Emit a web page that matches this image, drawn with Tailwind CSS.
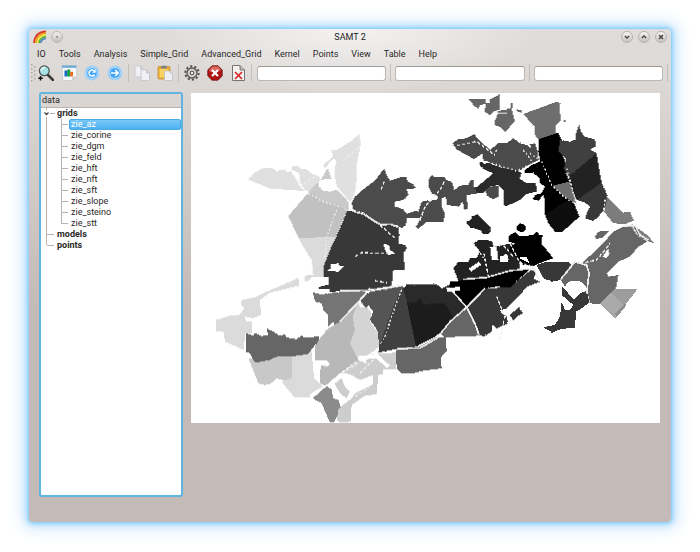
<!DOCTYPE html>
<html lang="en">
<head>
<meta charset="utf-8">
<title>SAMT 2</title>
<script src="https://cdn.jsdelivr.net/npm/@tailwindcss/browser@4"></script>
</head>
<body class="bg-white">
<div class="flex min-h-screen px-[29px] pt-[29px] pb-[30px] font-['Roboto','Noto_Sans',sans-serif] text-[9px] leading-[11px] text-[#2b2827]">
<div class="flex min-w-0 flex-1 flex-col rounded-[4px] bg-[radial-gradient(ellipse_190px_64px_at_50%_0,#f3f2f1,transparent),linear-gradient(#dfdddb_0,#dbd7d4_60px,#c4bab7_280px)] shadow-[0_0_3px_1px_#86d0fb,0_0_7px_2px_#9bd6fb,0_0_16px_7px_#d3e8fd]">

<header class="flex h-4 items-center px-1 text-[#222]">
  <div class="flex w-[46px] items-center gap-1">
  <svg class="size-[14px]" viewBox="0 0 14 14" fill="none" stroke-width="1.8"><path stroke="#d93a2b" d="M1 13Q2 2 13 1.500"/><path stroke="#f0a21c" d="M2.700 13Q4 4 13 3.200"/><path stroke="#f5e53b" d="M4.400 13Q5.500 6 13 4.900"/><path stroke="#59b83c" d="M6 13Q7 7.500 13 6.600"/><path stroke="#5b87c9" d="M7.700 13Q8 9 13 8.300"/></svg>
  <button aria-label="Window menu" class="flex size-3 items-center justify-center rounded-full border border-[#bbb8b6] bg-linear-to-b from-[#f0f0ef] to-[#c4c1bf]"><span class="size-[2px] rounded-full bg-[#888]"></span></button>
  </div>
  <h1 class="flex-1 text-center">SAMT 2</h1>
  <div class="flex gap-[5px]">
    <button aria-label="Minimize" class="flex size-3 items-center justify-center rounded-full border border-[#b5b2af] bg-linear-to-b from-[#f6f6f5] to-[#c4c0bd]"><svg class="size-2" viewBox="0 0 8 8" fill="none" stroke="#444" stroke-width="1.300"><path d="M1.800 3 4 5 6.200 3"/></svg></button>
    <button aria-label="Maximize" class="flex size-3 items-center justify-center rounded-full border border-[#b5b2af] bg-linear-to-b from-[#f6f6f5] to-[#c4c0bd]"><svg class="size-2" viewBox="0 0 8 8" fill="none" stroke="#444" stroke-width="1.300"><path d="M1.800 5 4 3 6.200 5"/></svg></button>
    <button aria-label="Close" class="flex size-3 items-center justify-center rounded-full border border-[#b5b2af] bg-linear-to-b from-[#f6f6f5] to-[#c4c0bd]"><svg class="size-2" viewBox="0 0 8 8" fill="none" stroke="#444" stroke-width="1.400"><path d="M2 2 6 6M6 2 2 6"/></svg></button>
  </div>
</header>

<nav class="flex h-[18px] items-center gap-[13px] px-2">
  <button>IO</button><button>Tools</button><button>Analysis</button><button>Simple_Grid</button><button>Advanced_Grid</button><button>Kernel</button><button>Points</button><button>View</button><button>Table</button><button>Help</button>
</nav>

<div class="flex h-[20px] items-center pr-[3px] pl-[2px]">
  <svg class="mr-[2px] h-5 w-[5px] shrink-0" viewBox="0 0 5 20" fill="#aaa6a3"><path d="M0 1h1.500v1.500H0zM3 3h1.500v1.500H3zM0 5h1.500v1.500H0zM3 7h1.500v1.500H3zM0 9h1.500v1.500H0zM3 11h1.500v1.500H3zM0 13h1.500v1.500H0zM3 15h1.500v1.500H3zM0 17h1.500v1.500H0z"/></svg>
  <div class="flex shrink-0 gap-[7px]">
    <button aria-label="Zoom"><svg class="size-4" viewBox="0 0 16 16"><path d="M9.500 9.500 15 15" stroke="#3b3b3b" stroke-width="2.600" stroke-linecap="round"/><circle cx="6.300" cy="5.800" r="4.900" fill="#a5e1e5" stroke="#4c5555" stroke-width="1.300"/><path d="M3 5.500Q4 2.500 7 2.500" stroke="#effcfc" stroke-width="1.500" fill="none"/><path d="M2.500 11v4.500M.3 13.200h4.500" stroke="#111" stroke-width="1.400"/></svg></button>
    <button aria-label="Chart"><svg class="size-4" viewBox="0 0 16 16"><path d="M1 .5h14.500v11L11 15.500H2z" fill="#f7f9fa" stroke="#bdc3c6" stroke-width=".6"/><path d="M1 .5h14.500v2.300H1z" fill="#6da8d6"/><path d="M15.500 11.500 11 15.500l.5-3.500z" fill="#c4c8ca"/><path d="M3.500 5.500h2.700v6H3.500z" fill="#1464c8"/><path d="M6.200 4.500h3v7h-3z" fill="#129c44"/><path d="M9.200 6.800h2.800v4.700H9.200z" fill="#ee6b1d"/></svg></button>
    <button aria-label="Refresh"><svg class="size-4" viewBox="0 0 16 16" fill="none"><circle cx="8" cy="8" r="6.700" fill="#3fa2f4" stroke="#9fd0fa" stroke-width="1.400"/><circle cx="8" cy="8" r="5.400" stroke="#e9f6ff" stroke-width=".8"/><path d="M10.600 9.500A3 3 0 1 1 10.200 5.900" stroke="#fff" stroke-width="1.500"/><path d="M11.700 4v3.800H8z" fill="#fff"/></svg></button>
    <button aria-label="Forward"><svg class="size-4" viewBox="0 0 16 16" fill="none"><circle cx="8" cy="8" r="6.700" fill="#3fa2f4" stroke="#9fd0fa" stroke-width="1.400"/><circle cx="8" cy="8" r="5.400" stroke="#e9f6ff" stroke-width=".8"/><path d="M4 8h7M8.200 5 11.200 8l-3 3" stroke="#fff" stroke-width="1.600"/></svg></button>
  </div>
  <span class="mx-[5px] h-[18px] w-px shrink-0 bg-[#c3bfbc]"></span>
  <div class="flex shrink-0 gap-[7px]">
    <button aria-label="Copy"><svg class="size-4" viewBox="0 0 16 16" fill="#f1f1f5" stroke="#c1c1cb" stroke-width=".8"><path d="M1 1h5.500L9 4v8H1z"/><path d="M6.500 1v3H9" fill="#cfcfd9"/><path d="M7 5h5.500L15.500 8v7.500H7z"/><path d="M12.500 5v3h3" fill="#cfcfd9"/></svg></button>
    <button aria-label="Paste"><svg class="size-4" viewBox="0 0 16 16"><rect x="1" y="1.500" width="12" height="12.500" rx="1" fill="#e9ad36" stroke="#bf8520" stroke-width=".7"/><rect x="2.500" y="4" width="9" height="8.500" fill="#f8d25e"/><path d="M4 3.500V1.500l2-.9h2l2 .9v2z" fill="#858585"/><path d="M7.500 6h5L15.500 9v6.500h-8z" fill="#eeeef3" stroke="#b9b9c4" stroke-width=".7"/><path d="M12.500 6v3h3" fill="#cfcfd9"/></svg></button>
  </div>
  <span class="mx-[5px] h-[18px] w-px shrink-0 bg-[#c3bfbc]"></span>
  <div class="flex shrink-0 gap-[7px]">
    <button aria-label="Settings"><svg class="size-4" viewBox="0 0 16 16" fill="none" stroke="#555"><circle cx="8" cy="8" r="6.700" stroke-width="2" stroke-dasharray="2.200 2.009"/><circle cx="8" cy="8" r="5" fill="#d3d1cf" stroke-width="1.300"/><circle cx="8" cy="8" r="1.800" fill="#eee" stroke-width="1.100"/></svg></button>
    <button aria-label="Stop"><svg class="size-4" viewBox="0 0 16 16"><path d="M5 .8h6L15.200 5v6L11 15.200H5L.8 11V5z" fill="#ac1514" stroke="#711312" stroke-width=".8"/><path d="M5 1.600h6L14 5q-6 4-12 1z" fill="#dc6a62"/><path d="m5 5 6 6m0-6-6 6" stroke="#fff" stroke-width="2.200"/></svg></button>
    <button aria-label="Delete file"><svg class="size-4" viewBox="0 0 16 16"><path d="M2.500.500h7.500L14.500 5v10.500h-12z" fill="#f3f2f0" stroke="#777573"/><path d="M10 .5V5h4.500" fill="#bbb" stroke="#555" stroke-width=".7"/><path d="m5 7 7 7m0-7-7 7" stroke="#d92525" stroke-width="1.700"/></svg></button>
  </div>
  <span class="mx-[5px] h-[18px] w-px shrink-0 bg-[#c3bfbc]"></span>
  <input aria-label="Field 1" class="h-[15px] w-0 min-w-0 flex-1 rounded-[3px] border border-[#bdb8b5] border-t-[#a29c99] bg-white px-1">
  <span class="mx-1 h-[18px] w-px shrink-0 bg-[#c3bfbc]"></span>
  <input aria-label="Field 2" class="h-[15px] w-0 min-w-0 flex-1 rounded-[3px] border border-[#bdb8b5] border-t-[#a29c99] bg-white px-1">
  <span class="mx-1 h-[18px] w-px shrink-0 bg-[#c3bfbc]"></span>
  <input aria-label="Field 3" class="h-[15px] w-0 min-w-0 flex-1 rounded-[3px] border border-[#bdb8b5] border-t-[#a29c99] bg-white px-1">
  <span class="ml-1 h-[18px] w-px shrink-0 bg-[#c3bfbc]"></span>
</div>

<main class="flex flex-1 gap-2 pt-[9px] pr-[11px] pb-[25px] pl-[10px]">
  <aside class="w-36 shrink-0 rounded-[3px] border-2 border-[#5fb4e0] bg-white">
    <h2 class="h-[14px] border-b border-[#b9b4b1] bg-[#d9d5d2] px-px leading-[13px]">data</h2>
    <ul class="relative pl-4 before:absolute before:top-0 before:left-[5px] before:h-[137px] before:w-px before:bg-[#b5b2b0]">
      <li class="relative before:absolute before:top-[5px] before:left-[-7px] before:h-px before:w-[5px] before:bg-[#b5b2b0]">
        <svg class="absolute top-[2px] left-[-14px] h-[7px] w-[7px] bg-white" viewBox="0 0 7 7" fill="none" stroke="#444" stroke-width="1.300"><path d="M1.500 2.500 3.500 4.500 5.500 2.500"/></svg>
        <span class="font-bold">grids</span>
        <ul class="relative pl-[12px] before:absolute before:top-0 before:left-[4px] before:h-[105px] before:w-px before:bg-[#b5b2b0]">
          <li class="relative rounded-[2px] border border-[#48a8e4] bg-linear-to-b from-[#78c8f8] to-[#4eb1ef] pl-px leading-[9px] text-white before:absolute before:top-[4px] before:left-[-9px] before:h-px before:w-[7px] before:bg-[#b5b2b0]">zie_az</li>
          <li class="relative pl-[2px] before:absolute before:top-[5px] before:left-[-8px] before:h-px before:w-[7px] before:bg-[#b5b2b0]">zie_corine</li>
          <li class="relative pl-[2px] before:absolute before:top-[5px] before:left-[-8px] before:h-px before:w-[7px] before:bg-[#b5b2b0]">zie_dgm</li>
          <li class="relative pl-[2px] before:absolute before:top-[5px] before:left-[-8px] before:h-px before:w-[7px] before:bg-[#b5b2b0]">zie_feld</li>
          <li class="relative pl-[2px] before:absolute before:top-[5px] before:left-[-8px] before:h-px before:w-[7px] before:bg-[#b5b2b0]">zie_hft</li>
          <li class="relative pl-[2px] before:absolute before:top-[5px] before:left-[-8px] before:h-px before:w-[7px] before:bg-[#b5b2b0]">zie_nft</li>
          <li class="relative pl-[2px] before:absolute before:top-[5px] before:left-[-8px] before:h-px before:w-[7px] before:bg-[#b5b2b0]">zie_sft</li>
          <li class="relative pl-[2px] before:absolute before:top-[5px] before:left-[-8px] before:h-px before:w-[7px] before:bg-[#b5b2b0]">zie_slope</li>
          <li class="relative pl-[2px] before:absolute before:top-[5px] before:left-[-8px] before:h-px before:w-[7px] before:bg-[#b5b2b0]">zie_steino</li>
          <li class="relative pl-[2px] before:absolute before:top-[5px] before:left-[-8px] before:h-px before:w-[7px] before:bg-[#b5b2b0]">zie_stt</li>
        </ul>
      </li>
      <li class="relative font-bold before:absolute before:top-[5px] before:left-[-10px] before:h-px before:w-[7px] before:bg-[#b5b2b0]">models</li>
      <li class="relative font-bold before:absolute before:top-[5px] before:left-[-10px] before:h-px before:w-[7px] before:bg-[#b5b2b0]">points</li>
    </ul>
  </aside>

  <section class="min-w-0 flex-1 pt-px" aria-label="Map">
  <svg class="block w-full bg-white" viewBox="573 279 1407 990">
    <defs><filter id="rough" x="0" y="0" width="100%" height="100%"><feTurbulence type="fractalNoise" baseFrequency=".15" numOctaves="2" seed="4"/><feDisplacementMap in="SourceGraphic" scale="5" xChannelSelector="R" yChannelSelector="G"/></filter></defs>
    <g filter="url(#rough)" shape-rendering="crispEdges">
    <!-- north-west parcels -->
    <g transform="translate(570 270)">
      <path fill="#e0e0e0" d="M173 267 195 247 215 236 235 233 250 236 260 246 270 240 285 238 292 247 303 243 312 258 320 270 330 290 345 303 300 300 240 296 210 283 180 272ZM303 238 308 228 325 228 333 236 350 238 365 250 390 262 385 277 357 303 345 300 328 275 330 252 318 245ZM422 180 440 180 480 155 510 130 511 165 505 200 500 225 500 260 497 300 485 330 478 335 460 312 440 290 435 265 435 230 440 215 430 205 405 235 400 225 425 202 430 195Z"/>
      <path fill="#c1c1c1" d="M357 305 295 378 325 443 375 445 380 441 437 440 472 362Z"/>
      <path fill="#c9c9c9" d="M413 233 424 266 388 270 385 278 388 292 400 302 420 305 440 299 460 318 477 338 475 362 430 345 390 332 357 305 385 277 395 265Z"/>
      <path fill="#dbdbdb" d="M325 443 375 445 380 441 437 440 410 508 400 530 400 560 365 562 357 572 345 575 345 557 370 555 365 510 345 480Z"/>
    </g>
    <!-- central north parcels -->
    <g transform="translate(1020 270)">
      <path fill="#4b4b4b" d="M35 340 45 320 80 290 105 272 125 245 133 238 140 255 150 272 180 262 200 262 203 275 220 283 227 295 200 297 205 315 190 330 165 335 165 350 190 358 200 372 225 363 235 365 245 335 290 330 295 318 275 310 265 290 265 270 275 255 285 262 315 262 318 270 335 275 343 300 360 287 385 285 390 272 400 270 402 290 414 292 412 310 380 316 383 355 373 360 368 335 355 350 320 345 318 320 305 325 305 350 315 370 310 397 260 395 235 417 228 410 242 385 200 385 198 405 185 415 170 405 120 402 95 385 70 367 40 360ZM338 160 355 147 380 145 403 132 412 145 425 158 462 188 480 170 480 222 430 212 428 190 402 207 370 190 350 178Z"/>
      <path fill="#383838" d="M22 362 50 362 75 372 100 392 120 402 150 402 175 412 178 435 175 460 195 465 200 475 190 490 195 540 160 540 155 588 90 602-32 605-32 598-72 595-50 587-35 585-35 562-50 560-50 530-30 480 0 415Z"/>
      <path fill="#666" d="M385 27 437 27 437 42 420 45 415 57 405 50ZM437 40 450 38 455 25 480 15 480 60 465 62 450 75 433 65 435 58Z"/>
      <path fill="#222" d="M377 395 393 390 395 380 412 373 425 385 452 412 450 430 430 432 420 420 390 412ZM400 460 415 450 455 452 462 470 515 460 540 510 540 580 480 550 390 575 355 572 340 535 355 515 385 515 390 505 410 505 420 485Z"/>
      <path fill="#fff" d="M130 460 150 468 150 480 165 490 145 495 135 480ZM-40 543-28 535-28 522-5 520 0 528 15 527 0 540-5 545ZM450 470 470 470 475 510 455 510ZM485 500 500 490 505 510 488 515Z"/>
    </g>
    <!-- north-east parcels -->
    <g transform="translate(1470 270)">
      <path fill="#666" d="M0 28 15 22 28 12 22 32 25 45 10 60 0 60ZM13 95 20 80 25 62 50 60 55 55 65 58 75 95 60 110 45 127 30 112 15 105ZM63 40 70 38 66 57 60 57ZM80 58 97 62 95 68 82 65ZM315 440 325 425 358 422 340 442 318 447ZM370 425 395 412 425 408 440 435 472 455 445 470 420 500 385 515 350 550 355 560 385 555 378 595 330 642 300 640 290 600 290 530 275 520 330 470Z"/>
      <path fill="#4b4b4b" d="M0 180 25 160 50 160 70 145 90 160 110 165 122 177 120 162 135 160 142 180 145 210 110 228 85 245 50 238 0 218-12 200Z"/>
      <path fill="#2c2c2c" d="M-33 215-20 218-20 230-30 223-10 220 0 220 40 235 85 243 95 250 88 265 110 280 138 280 140 305 110 312 90 330 50 348 40 345 40 300 25 285 0 290-20 310-40 308-45 295-20 275 10 250-15 240-28 230Z"/>
      <path fill="#4b4b4b" d="M-15 300 0 290 25 288 25 320 10 328-8 318Z"/>
      <path fill="#6e6e6e" d="M100 72 200 35 208 38 212 90 198 105 198 130 145 148 135 135 135 112 120 95ZM222 90h6v6h-6Z"/>
      <path fill="#050505" d="M145 148 205 128 215 150 222 150 210 185 225 210 222 235 238 275 190 287 220 315 250 335 268 380 235 410 215 427 195 425 175 400 165 375 165 335 160 315 145 332 128 328 135 315 155 310 165 290 150 280 150 265 130 250 105 250 105 240 125 225 150 215 145 180Z"/>
      <path fill="#111" d="M165 375 235 330 248 345 268 380 235 410 215 427 195 425 175 400Z"/>
      <path fill="#6e6e6e" d="M190 287 238 275 258 340 220 318Z"/>
      <path fill="#414141" d="M210 150 240 155 258 148 258 130 268 103 272 125 285 140 315 148 317 170 300 178 320 190 235 260 222 235 228 205 205 185Z"/>
      <path fill="#222" d="M235 260 320 190 328 240 335 278 260 330 245 295Z"/>
      <path fill="#383838" d="M260 330 335 278 352 315 345 355 325 380 310 393 285 385 290 370 300 350 285 338Z"/>
      <path fill="#7c7c7c" d="M352 320 395 365 420 365 432 392 405 402 370 400 342 365ZM425 402 450 420 475 437 492 460 470 452 445 438Z"/>
      <path fill="#000" d="M80 410 90 400 105 405 107 420 95 428 80 420ZM58 435 75 427 85 437 100 438 130 435 140 423 148 435 157 435 155 465 170 480 190 505 160 515 130 528 100 525 85 505 55 480 75 460 55 455Z"/>
      <path fill="#fff" d="M338 500 355 475 358 490 350 505Z"/>
    </g>
    <!-- south-west parcels -->
    <g transform="translate(570 750)">
      <path fill="#dbdbdb" d="M78 210 120 197 145 197 155 185 163 175 153 165 155 150 195 142 230 125 300 95 325 83 328 107 240 128 210 150 213 195 190 205 165 200 168 215 185 215 185 250 165 250 162 300 105 275 100 245 78 243ZM305 320 365 305 372 385 400 410 362 430 358 443 315 443 290 415 275 395 305 385Z"/>
      <path fill="#c8c8c8" d="M175 325 305 315 305 385 285 392 260 385 245 400 225 405 205 400Z"/>
      <path fill="#666" d="M168 250 190 257 195 248 215 258 235 256 230 235 250 245 270 258 285 253 290 262 320 268 335 255 340 262 365 262 385 257 390 275 375 285 355 312 300 320 265 318 240 330 195 338 180 310 168 305Z"/>
      <path fill="#8b8b8b" d="M410 408 425 418 430 445 445 450 455 480 430 518 420 518 395 460 368 445Z"/>
    </g>
    <!-- southern parcels -->
    <g transform="translate(1020 750)">
      <path fill="#747474" d="M-82 127-55 133 0 125 60 120 80 128 0 215-15 225-20 215-35 230-35 195-50 180-55 160-75 155Z"/>
      <path fill="#b8b8b8" d="M-60 265-35 235 0 215 55 155 65 200 60 325 0 370-45 408-60 400-58 345-40 350-30 342-42 330-75 330-75 290Z"/>
      <path fill="#d4d4d4" d="M55 155 60 172 80 170 95 190 90 215 115 250 118 290 80 318 55 330 30 280 45 240 38 200Z"/>
      <path fill="#cdcdcd" d="M5 370 55 330 80 340 75 318 120 310 168 308 168 357 130 357 128 372 115 375 110 433 75 437 35 465 32 515 0 518-10 510-5 480 15 460 35 445 45 430 85 410 100 402 100 375 60 390 30 372ZM-17 400 5 385 15 410 30 425 20 445 0 430Z"/>
      <path fill="#555" d="M60 150 90 125 190 108 170 155 118 290 112 240 90 210 100 185 85 165 78 175Z"/>
      <path fill="#414141" d="M190 110 200 150 228 290 165 298 115 308 118 285 165 155Z"/>
      <path fill="#2b2b2b" d="M190 118 200 103 290 103 305 115 330 103 382 170 315 240 228 290 200 150Z"/>
      <path fill="#1a1a1a" d="M200 155 225 160 240 145 252 162 315 160 338 200 310 240 285 260 228 290Z"/>
      <path fill="#666" d="M380 175 418 257 315 262 300 250 340 205ZM168 300 240 290 290 262 318 262 320 305 302 320 305 355 250 362 220 370 185 370 170 355Z"/>
      <path fill="#000" d="M330 95 400 88 450 75 510 60 570 58 545 80 510 112 470 110 435 115 380 170 330 120Z"/>
      <path fill="#383838" d="M380 172 435 115 510 112 560 70 575 60 590 65 580 85 600 95 560 110 540 135 500 175 455 230 455 245 435 258 418 257ZM455 205 485 180 500 200 505 220 470 235 460 225ZM510 195 535 172 550 190 530 200 520 212ZM455 200 490 190 505 215 475 227Z"/>
    </g>
    <!-- south-east parcels -->
    <g transform="translate(1470 690)">
      <path fill="#383838" d="M140 105 165 97 235 97 248 107 212 150 185 155 160 145ZM215 170 235 190 252 208 270 190 290 182 298 218 275 235 258 245 255 293 210 297 188 308 160 292 195 285 210 260 215 215 225 240 240 240 250 225 215 195Z"/>
      <path fill="#666" d="M212 150 245 105 260 97 290 110 295 180 280 160 265 152 235 155 225 170Z"/>
      <path fill="#9d9d9d" d="M375 177 442 178 375 265 330 222Z"/>
      <path fill="#aaa" d="M362 188 400 225 375 262 332 220Z"/>
      <path fill="#8f8f8f" d="M405 222 410 225 380 262 375 250Z"/>
      <path fill="#fff" d="M85 83 108 80 120 100 98 90ZM30 78 55 78 55 96 30 96ZM30 240 60 235 58 260 35 250Z"/>
    </g>
    </g>
    <!-- roads and ditches between the parcels -->
    <g fill="none" stroke="#eee" stroke-width="4" shape-rendering="crispEdges">
      <path stroke-width="5" d="M1055 632 1090 642 1125 665 1145 675 1170 672 1195 682M1020 873 1110 870 1210 855M1190 1046 1260 1044 1310 1015 1350 965 1400 922 1455 865M1355 870 1400 922 1425 970 1437 1005M1390 838 1460 832 1530 812 1600 805 1620 840M1020 965 1100 878M1682 838 1725 785 1760 795 1767 820 1760 880M1870 676 1905 676 1920 705 1945 720M1490 340 1520 339"/>
      <path stroke-dasharray="10 6" d="M945 530 900 560M1144 568 1154 542M1140 675 1185 715M1065 770 1085 758 1180 760M1260 660 1275 620 1320 570 1335 540M1370 437 1430 424 1485 465M1030 480 1075 445M1125 842 1160 848M1110 865 1060 925M1740 790 1790 780 1830 730M1500 1020 1515 950 1490 890M1080 1120 1130 1070M1025 1120 1080 1085M1065 1190 1110 1160M1530 730 1560 790 1600 800M1480 740 1510 735 1540 770M1452 760 1465 830"/>
      <path stroke-dasharray="5 7" d="M925 580 970 605 1020 620M1475 490 1550 513 1610 485M1625 485 1655 555 1690 590 1728 612M1700 505 1715 560 1730 615M1205 870 1185 920 1155 1010 1135 1040M1420 730 1455 780M1570 450 1600 490M1590 460 1620 480M1490 450 1480 470M875 520 920 575M1010 630 980 710 975 770M1815 600 1810 640"/>
      <path stroke="#fff" stroke-width="12" d="M1340 870 1380 866M1610 810 1630 845M1075 1075 1130 1068 1165 1100M1410 810 1440 790"/>
    </g>
  </svg>
  </section>
</main>
</div>
</div>
</body>
</html>
